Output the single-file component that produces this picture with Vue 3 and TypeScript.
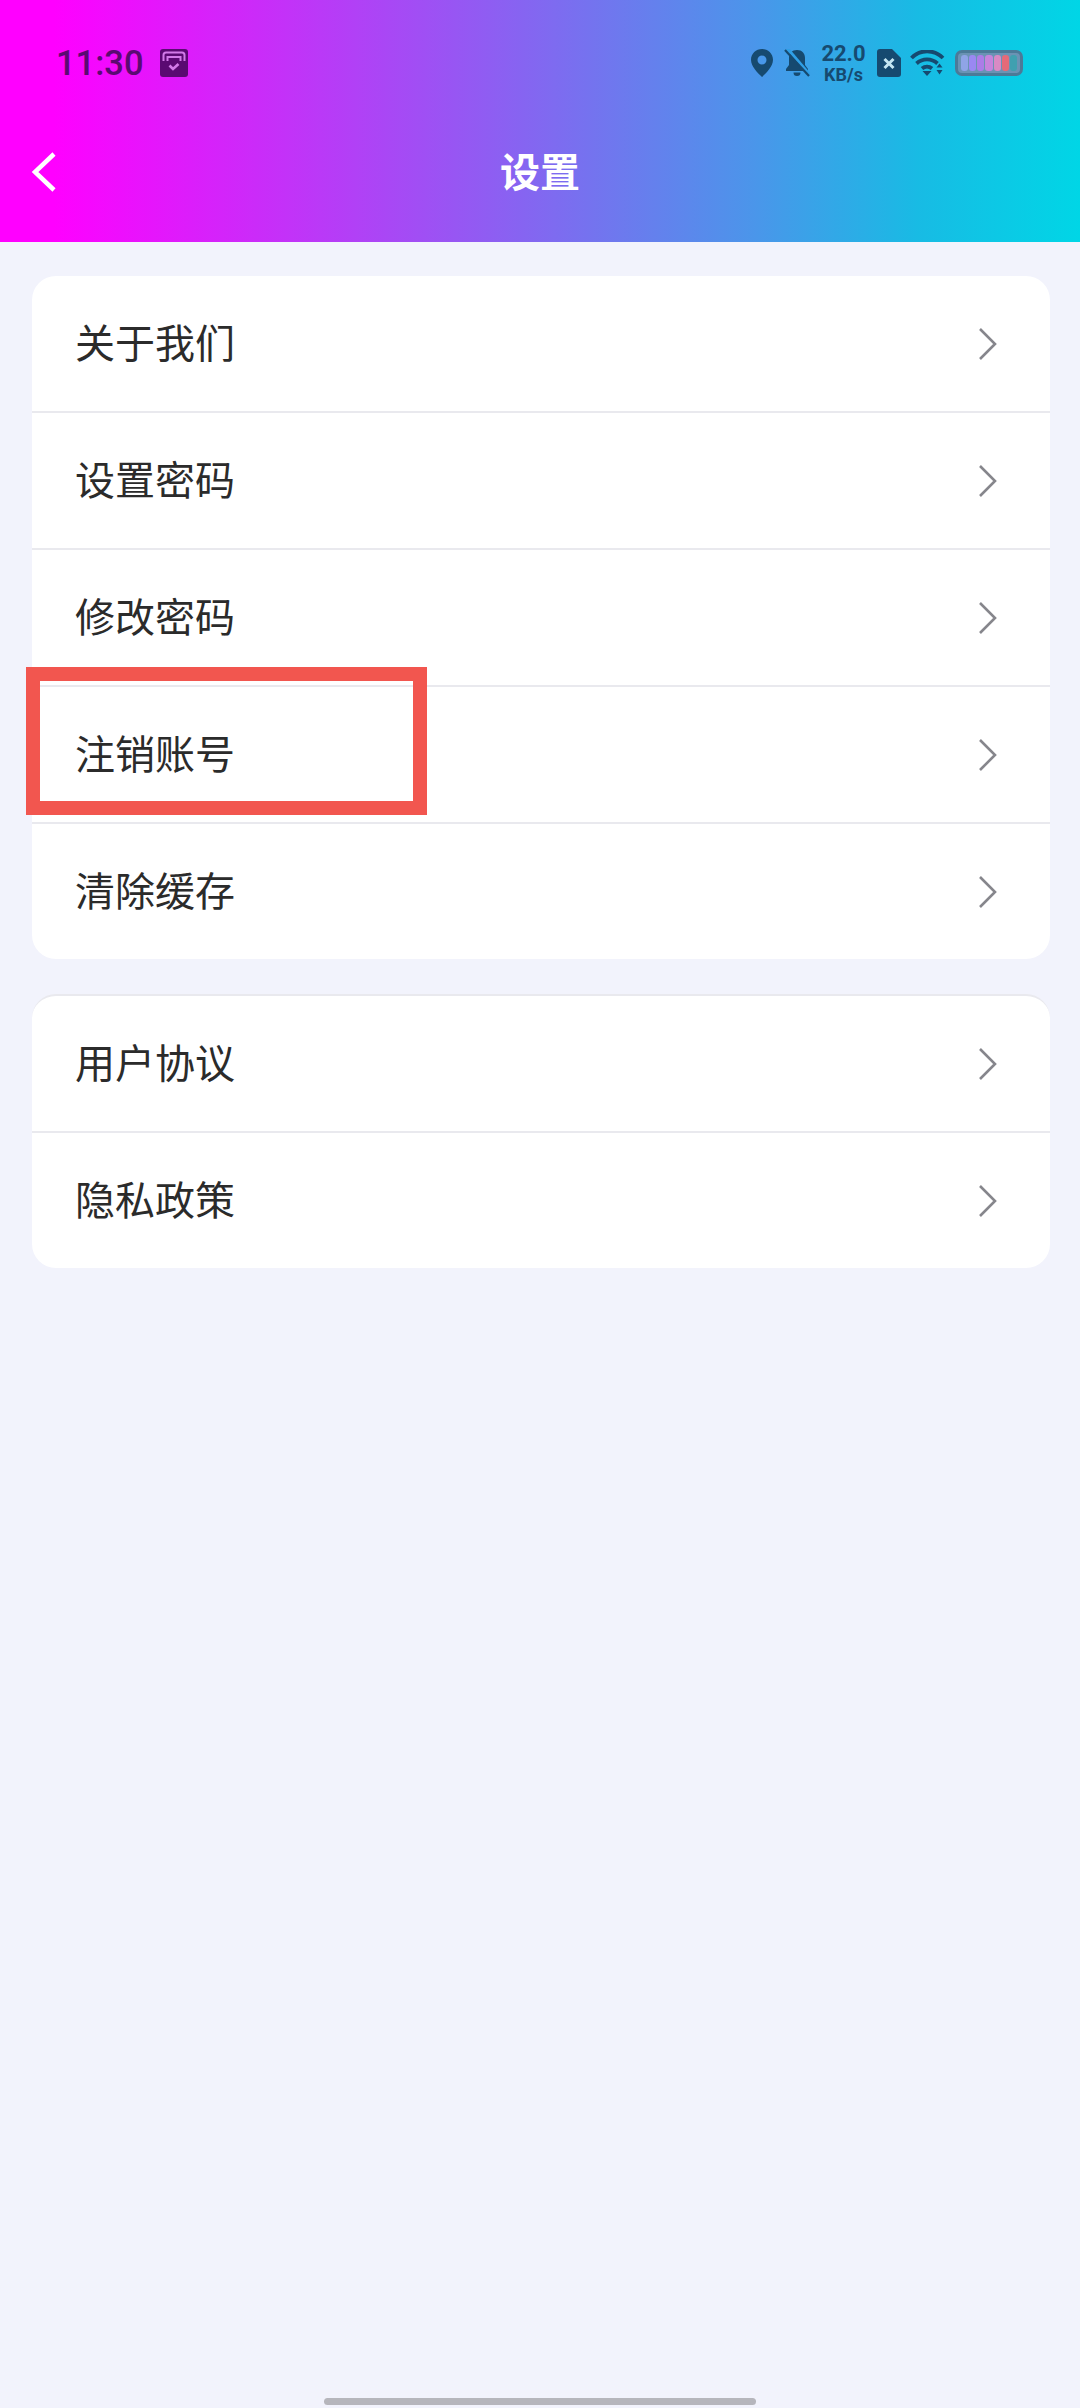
<template>
  <div class="page">
    <header class="top">
      <div class="status">
        <div class="status-left">
          <span class="time">11:30</span>
          <svg class="ico-inbox" width="28" height="28" viewBox="0 0 28 28">
            <rect width="28" height="28" rx="3" fill="#5a0a72" />
            <path d="M3.500 12V6Q3.500 3.500 6 3.500h16Q24.500 3.500 24.500 6V12" fill="none" stroke="#d27ae8" stroke-width="2" />
            <path d="M7.500 12V8h13V12" fill="none" stroke="#d27ae8" stroke-width="2" />
            <path d="M9.500 16.500l3.500 3.500 5.500-5" fill="none" stroke="#d27ae8" stroke-width="2.600" />
          </svg>
        </div>
        <div class="status-right">
          <svg width="22" height="28" viewBox="0 0 22 28">
            <path fill-rule="evenodd" d="M11 0C5 0 0 4.700 0 10.800 0 17.500 6.500 24 11 28c4.500-4 11-10.500 11-17.200C22 4.700 17 0 11 0zm0 6.500a4.500 4.500 0 1 1 0 9 4.500 4.500 0 0 1 0-9z" class="fg" />
          </svg>
          <svg class="ico-bell" width="26" height="28" viewBox="0 0 26 28">
            <path d="M13 1c-5 0-8 3.500-8 8v7l-3 4v2h22v-2l-3-4V9c0-4.500-3-8-8-8zM9.500 23.500a3.500 3.500 0 0 0 7 0z" class="fg" />
            <path d="M3 -1l23 27" stroke="#2f9fe6" stroke-width="3" />
            <path d="M1 1l24 26" stroke="#164a70" stroke-width="2.200" />
          </svg>
          <div class="speed">
            <span class="speed-num">22.0</span>
            <span class="speed-unit">KB/s</span>
          </div>
          <svg class="ico-sim" width="24" height="28" viewBox="0 0 24 28">
            <path d="M3 0h12l9 9v16a3 3 0 0 1-3 3H3a3 3 0 0 1-3-3V3a3 3 0 0 1 3-3z" class="fg" />
            <path d="M7.500 10l9 9M16.500 10l-9 9" stroke="#c4e6f2" stroke-width="3" />
          </svg>
          <svg class="ico-wifi" width="35" height="26" viewBox="0 0 35 26">
            <path d="M1.500 8C10-1 24-1 33 8M6.500 13.500c6-5.500 15-5.500 21 0M12 18.500c3-2.500 7-2.500 10 0" fill="none" stroke="#164a70" stroke-width="3.800" />
            <path d="M12.500 21h9l-4.500 5zM26.500 17.500l3-4 3 4zM26.500 20h6l-3 4.500z" class="fg" />
          </svg>
          <div class="battery">
            <span v-for="c in batteryBars" :key="c" class="cell" :style="{ background: c }" />
          </div>
        </div>
      </div>
      <div class="nav">
        <svg class="back" width="26" height="42" viewBox="0 0 26 42">
          <path d="M23 3L4 21l19 18" fill="none" stroke="#fff" stroke-width="4.500" />
        </svg>
        <span class="title">设置</span>
      </div>
    </header>

    <main class="content">
      <section v-for="(group, i) in groups" :key="i" class="card">
        <div v-for="item in group" :key="item" class="row">
          <span class="label">{{ item }}</span>
          <svg width="20" height="34" viewBox="0 0 20 34">
            <path d="M3 2l15 15L3 32" fill="none" stroke="#86868c" stroke-width="2.600" />
          </svg>
        </div>
      </section>
    </main>

    <div class="mark"></div>
    <div class="home-bar"></div>
  </div>
</template>

<script setup lang="ts">
const groups: string[][] = [
  ["关于我们", "设置密码", "修改密码", "注销账号", "清除缓存"],
  ["用户协议", "隐私政策"],
];

const batteryBars: string[] = ["#8fa4e6", "#9a88f2", "#ac7ce8", "#c684dc", "#d98ac4", "#e56a78", "#3fa0b0"];
</script>

<style>
html,
body {
  background: #f2f3fc;
}
</style>

<style scoped>
.page {
  position: relative;
  width: 1080px;
  height: 2408px;
  overflow: hidden;
  background: #f2f3fc;
  font-family: Roboto, "Noto Sans CJK SC", sans-serif;
}
.top {
  height: 242px;
  display: flex;
  flex-direction: column;
  background: linear-gradient(90deg, #ff00ff 5%, #4a96ea 70%, #18bbe4 85%, #00d6e6 100%);
}
.status {
  height: 126px;
  display: flex;
  align-items: center;
  justify-content: space-between;
  padding: 0 57px 0 56px;
}
.status-left {
  display: flex;
  align-items: center;
  gap: 16px;
}
.time {
  font-size: 34.500px;
  font-weight: 500;
  color: #5a0a72;
  line-height: 1;
}
.status-right {
  display: flex;
  align-items: center;
}
.fg {
  fill: #164a70;
}
.ico-bell {
  margin-left: 11px;
}
.speed {
  margin-left: 12px;
  width: 43px;
  display: flex;
  flex-direction: column;
  align-items: center;
  color: #164a70;
  font-weight: 700;
  line-height: 1;
}
.speed-num {
  font-size: 22px;
}
.speed-unit {
  font-size: 18px;
  margin-top: 1px;
}
.ico-sim {
  margin-left: 12px;
}
.ico-wifi {
  margin-left: 9px;
}
.battery {
  margin-left: 10px;
  width: 68px;
  height: 26px;
  box-sizing: border-box;
  padding: 2px 3px;
  display: flex;
  gap: 1px;
  border: 3px solid #4c7a98;
  border-radius: 7px;
  background: #6a93b4;
}
.cell {
  flex: 1;
  border-radius: 3px;
}
.nav {
  height: 90px;
  position: relative;
  display: flex;
  align-items: center;
  justify-content: center;
  margin-top: -1px;
}
.back {
  position: absolute;
  left: 31px;
  top: 26px;
}
.title {
  font-size: 40px;
  font-weight: 700;
  color: #fff;
}
.content {
  padding: 34px 30px 0 32px;
  display: flex;
  flex-direction: column;
  gap: 35px;
}
.card {
  background: #fff;
  border-radius: 24px;
  overflow: hidden;
}
.card + .card {
  border-top: 2px solid #e9e9ee;
}
.row {
  height: 137px;
  box-sizing: border-box;
  display: flex;
  align-items: center;
  justify-content: space-between;
  padding: 0 53px 0 43px;
  border-bottom: 2px solid #e9e9ee;
}
.row:last-child {
  height: 135px;
  border-bottom: none;
}
.label {
  margin-top: 3px;
  font-size: 40px;
  color: #2b2b2b;
  line-height: 1;
}
.mark {
  position: absolute;
  left: 26px;
  top: 667px;
  width: 401px;
  height: 148px;
  box-sizing: border-box;
  border: 14px solid #f2564f;
}
.home-bar {
  position: absolute;
  left: 324px;
  top: 2398px;
  width: 432px;
  height: 7px;
  border-radius: 4px;
  background: #b6b6bc;
}
</style>
